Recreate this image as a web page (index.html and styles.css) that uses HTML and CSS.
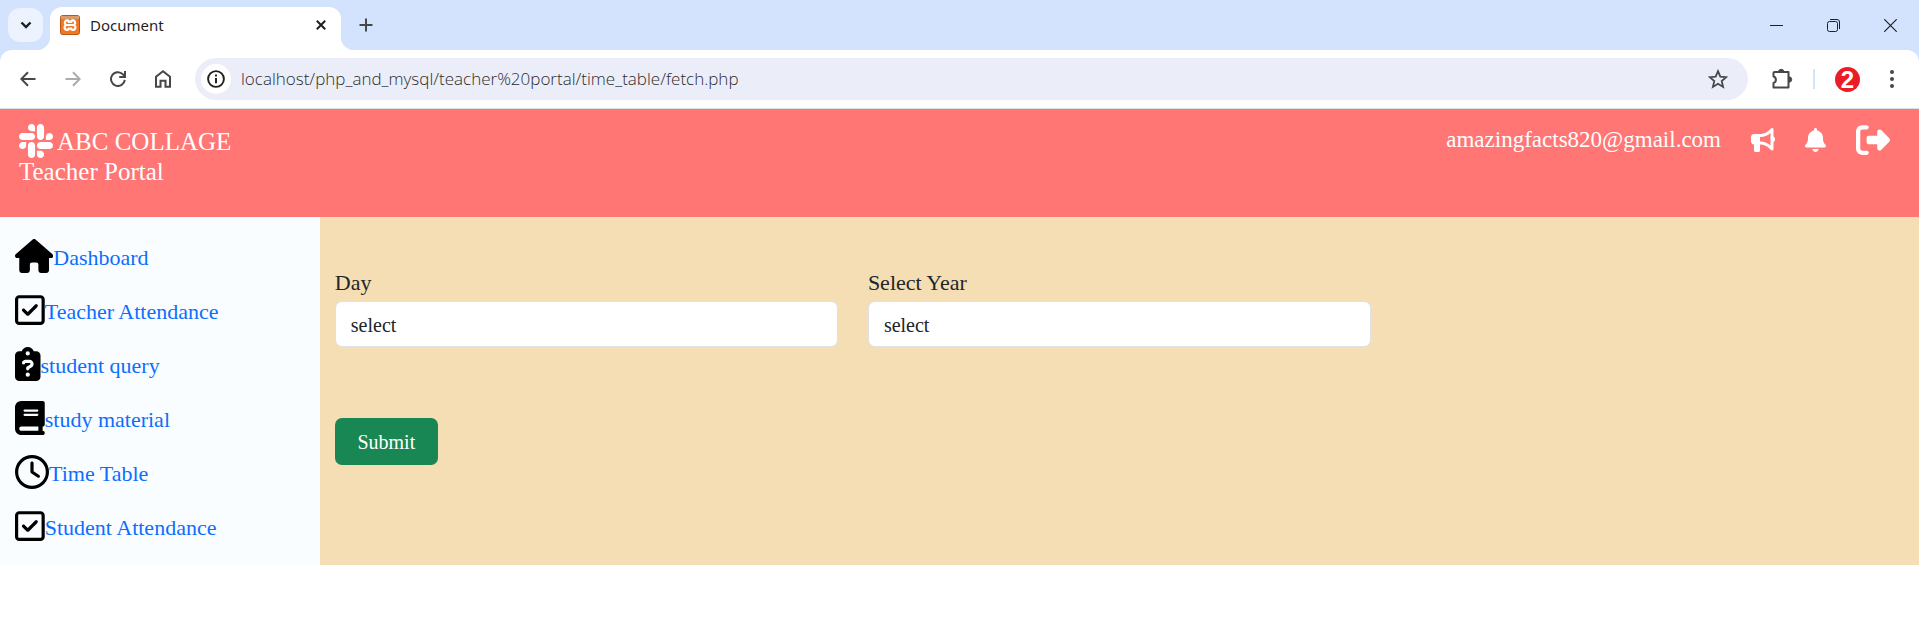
FILE: index.html
```html
<!DOCTYPE html>
<html lang="en">
<head>
<meta charset="utf-8">
<meta name="viewport" content="width=device-width, initial-scale=1">
<title>Document</title>
<link rel="stylesheet" href="styles.css">
</head>
<body>
<div class="browser">
  <div class="tab-strip">
    <button class="tab-search" aria-label="Search tabs"><svg width="12" height="8" viewBox="0 0 12 8" class="line"><path d="M1.500 1.500 6 6l4.500-4.500" stroke-width="2.400"/></svg></button>
    <div class="tab">
      <svg class="favicon" width="20" height="20" viewBox="0 0 20 20"><rect x=".5" y=".5" width="19" height="19" rx="2" fill="#f37623" stroke="#b5581a"/><path d="M1 1h18v3H1z" fill="#d99a6c"/><path d="M7.200 10H12.800M7.200 10a2.300 2.300 0 1 1 1.600-3.900L8.800 8 M7.200 10a2.500 2.500 0 1 0 1.600 4.300V12.500M12.800 10a2.300 2.300 0 1 0-1.600-3.900V8M12.800 10a2.500 2.500 0 1 1-1.600 4.300V12.500" fill="none" stroke="#fff" stroke-width="2.200" stroke-linejoin="round"/></svg>
      <span class="tab-title">Document</span>
      <button class="icon-button" aria-label="Close tab"><svg width="10" height="10" viewBox="0 0 10 10" class="line"><path d="m.8.800 8.400 8.400M9.200.800.800 9.200" stroke-width="2"/></svg></button>
    </div>
    <button class="icon-button new-tab" aria-label="New tab"><svg width="14" height="14" viewBox="0 0 14 14" class="line soft"><path d="M7 .5v13M.5 7h13" stroke-width="2"/></svg></button>
    <div class="window-controls">
      <button class="icon-button" aria-label="Minimize"><svg width="13" height="13" viewBox="0 0 13 13" class="line"><path d="M0 6.500h13"/></svg></button>
      <button class="icon-button" aria-label="Restore"><svg width="13" height="13" viewBox="0 0 13 13" class="line"><rect x=".5" y="2.500" width="10" height="10" rx="2"/><path d="M3 .5h7a2.500 2.500 0 0 1 2.500 2.500v7"/></svg></button>
      <button class="icon-button" aria-label="Close window"><svg width="13" height="13" viewBox="0 0 13 13" class="line"><path d="m.3.300 12.400 12.400M12.700.300.300 12.700" stroke-width="1.200"/></svg></button>
    </div>
  </div>
  <div class="toolbar">
    <div class="toolbar-buttons">
      <button class="icon-button" aria-label="Back"><svg width="16" height="16" viewBox="0 0 16 16" class="line soft"><path d="M15.500 8H1.800M8 1.200 1.300 8 8 14.800" stroke-width="2"/></svg></button>
      <button class="icon-button" aria-label="Forward"><svg width="16" height="16" viewBox="0 0 16 16" class="line faded"><path d="M.5 8h13.700M8 1.200 14.700 8 8 14.800" stroke-width="2"/></svg></button>
      <button class="icon-button" aria-label="Reload"><svg width="16" height="16" viewBox="0 0 16 16" class="line soft"><path d="M14.800 8.800A6.900 6.900 0 1 1 13 3.400L14.800 5.500M15 0v6H9.200" stroke-width="2"/></svg></button>
      <button class="icon-button" aria-label="Home"><svg width="16" height="18" viewBox="0 0 16 18" class="line soft"><path d="M1 16.800V6.800L8 1.300l7 5.500v10h-4.500v-6h-5v6z" stroke-width="2"/></svg></button>
    </div>
    <div class="address">
      <button class="site-info" aria-label="View site information"><svg width="18" height="18" viewBox="0 0 18 18" class="line"><circle cx="9" cy="9" r="7.900" stroke-width="1.900"/><path d="M9 8v5.200M9 4.600v2" stroke-width="2"/></svg></button>
      <input class="url" type="text" aria-label="Address" value="localhost/php_and_mysql/teacher%20portal/time_table/fetch.php">
      <button class="icon-button" aria-label="Bookmark this page"><svg width="20" height="20" viewBox="0 0 20 20" class="line soft"><path d="m10 2.200 2.300 5.500 5.900.500-4.500 3.900 1.400 5.800L10 14.800l-5.100 3.100 1.400-5.800-4.500-3.900 5.900-.500z" stroke-width="1.800"/></svg></button>
    </div>
    <div class="toolbar-end">
      <button class="icon-button" aria-label="Extensions"><svg width="22" height="22" viewBox="0 0 22 22" class="line soft"><path d="M3.500 4h14v15.500H2.500v-4.500a3.400 3.400 0 0 0 0-6.500V5a1 1 0 0 1 1-1z" stroke-width="2" stroke-linejoin="round"/><path d="M7.500 4a2.700 2.700 0 0 1 5.400 0M18 8.800a2.700 2.700 0 0 1 0 5.400" fill="#474747"/></svg></button>
      <span class="divider"></span>
      <button class="profile" aria-label="Profile">2</button>
      <button class="icon-button" aria-label="Menu"><svg width="4" height="18" viewBox="0 0 4 18" fill="#474747"><circle cx="2" cy="2" r="2"/><circle cx="2" cy="9" r="2"/><circle cx="2" cy="16" r="2"/></svg></button>
    </div>
  </div>
</div>
<header class="header">
  <div class="brand">
    <div class="brand-name"><svg class="slack" viewBox="0 32 448 448"><path d="M94.120 315.100c0 25.900-21.160 47.060-47.060 47.060S0 341 0 315.100c0-25.900 21.160-47.060 47.060-47.060h47.060v47.060zm23.720 0c0-25.900 21.160-47.060 47.060-47.060s47.060 21.160 47.060 47.060v117.840c0 25.900-21.160 47.060-47.060 47.060s-47.060-21.160-47.060-47.060V315.100zm47.060-188.980c-25.900 0-47.060-21.160-47.060-47.060S139 32 164.900 32s47.060 21.160 47.060 47.060v47.060H164.900zm0 23.720c25.900 0 47.060 21.160 47.060 47.060s-21.160 47.060-47.060 47.060H47.060C21.160 243.960 0 222.800 0 196.900s21.160-47.060 47.060-47.060H164.900zm188.980 47.060c0-25.900 21.160-47.060 47.060-47.060 25.900 0 47.060 21.160 47.060 47.060s-21.160 47.060-47.060 47.060h-47.060V196.900zm-23.720 0c0 25.900-21.160 47.060-47.060 47.060-25.900 0-47.060-21.160-47.060-47.060V79.060c0-25.900 21.160-47.060 47.060-47.060 25.900 0 47.060 21.160 47.060 47.060V196.900zM283.100 385.880c25.900 0 47.060 21.160 47.060 47.060 0 25.900-21.160 47.060-47.060 47.060-25.900 0-47.060-21.160-47.060-47.060v-47.060h47.060zm0-23.720c-25.900 0-47.060-21.160-47.060-47.060 0-25.900 21.160-47.060 47.060-47.060h117.840c25.900 0 47.060 21.160 47.060 47.060 0 25.900-21.160 47.060-47.060 47.060H283.100z"/></svg><span>ABC COLLAGE</span></div>
    <div class="brand-sub">Teacher Portal</div>
  </div>
  <div class="account">
    <span class="email">amazingfacts820@gmail.com</span>
    <a href="#" aria-label="Announcements"><svg class="small" viewBox="0 0 512 512"><path d="M480 32c0-12.900-7.800-24.600-19.800-29.600s-25.700-2.200-34.900 6.900L381.700 53c-48 48-113.100 75-181 75H192 160 64c-35.300 0-64 28.700-64 64v96c0 35.300 28.700 64 64 64l0 128c0 17.700 14.300 32 32 32h64c17.700 0 32-14.300 32-32V352l8.700 0c67.900 0 133 27 181 75l43.600 43.600c9.200 9.200 22.900 11.900 34.900 6.900s19.800-16.600 19.800-29.600V300.400c18.600-8.800 32-32.500 32-60.400s-13.400-51.600-32-60.400V32zm-64 76.700V240 371.300C357.200 317.800 280.500 288 200.700 288H192V192h8.700c79.800 0 156.500-29.800 215.300-83.300z"/></svg></a>
    <a href="#" aria-label="Notifications"><svg class="small" viewBox="0 0 448 512"><path d="M224 0c-17.700 0-32 14.300-32 32V51.200C119 66 64 130.600 64 208v18.800c0 47-17.300 92.400-48.500 127.600l-7.400 8.300c-8.400 9.400-10.400 22.900-5.300 34.400S19.400 416 32 416H416c12.600 0 24-7.400 29.200-18.900s3.100-25-5.300-34.400l-7.400-8.300C401.300 319.200 384 273.900 384 226.800V208c0-77.400-55-142-128-156.800V32c0-17.700-14.300-32-32-32zm45.300 493.300c12-12 18.700-28.300 18.700-45.300H224 160c0 17 6.700 33.300 18.700 45.300s28.300 18.700 45.300 18.700s33.300-6.700 45.300-18.700z"/></svg></a>
    <a href="#" aria-label="Log out"><svg class="large" viewBox="0 0 512 512"><path d="M377.900 105.900L500.700 228.700c7.200 7.200 11.300 17.100 11.300 27.300s-4.100 20.100-11.300 27.300L377.900 406.100c-6.400 6.400-15 9.900-24 9.900c-18.700 0-33.900-15.200-33.900-33.900l0-62.100-128 0c-17.700 0-32-14.300-32-32l0-64c0-17.700 14.300-32 32-32l128 0 0-62.100c0-18.700 15.200-33.900 33.900-33.900c9 0 17.600 3.600 24 9.900zM160 96L96 96c-17.700 0-32 14.300-32 32l0 256c0 17.700 14.300 32 32 32l64 0c17.700 0 32 14.300 32 32s-14.300 32-32 32l-64 0c-53 0-96-43-96-96L0 128C0 75 43 32 96 32l64 0c17.700 0 32 14.300 32 32s-14.300 32-32 32z"/></svg></a>
  </div>
</header>
<div class="page">
  <nav class="sidebar">
    <a href="#"><svg class="large" viewBox="0 0 576 512"><path d="M575.800 255.500c0 18-15 32.100-32 32.100h-32l.7 160.200c0 2.700-.2 5.400-.5 8.100V472c0 22.100-17.900 40-40 40H456c-1.100 0-2.200 0-3.300-.1c-1.400 .1-2.800 .1-4.200 .1H416 392c-22.100 0-40-17.900-40-40V448 384c0-17.700-14.300-32-32-32H256c-17.700 0-32 14.300-32 32v64 24c0 22.100-17.900 40-40 40H160 128.100c-1.500 0-3-.1-4.500-.2c-1.200 .1-2.400 .2-3.600 .2H104c-22.100 0-40-17.900-40-40V360c0-.9 0-1.900 .1-2.800V287.600H32c-18 0-32-14-32-32.100c0-9 3-17 10-24L266.400 8c7-7 15-8 22-8s15 2 21 7L564.800 231.500c8 7 12 15 11 24z"/></svg><span>Dashboard</span></a>
    <a href="#"><svg class="large" viewBox="0 0 448 512"><path d="M64 80c-8.800 0-16 7.200-16 16V416c0 8.800 7.200 16 16 16H384c8.800 0 16-7.200 16-16V96c0-8.800-7.200-16-16-16H64zM0 96C0 60.700 28.700 32 64 32H384c35.300 0 64 28.700 64 64V416c0 35.300-28.700 64-64 64H64c-35.300 0-64-28.700-64-64V96zM337 209L209 337c-9.400 9.400-24.600 9.400-33.900 0l-64-64c-9.400-9.400-9.400-24.600 0-33.900s24.600-9.400 33.900 0l47 47L303 175c9.400-9.400 24.600-9.400 33.900 0s9.400 24.600 0 33.900z"/></svg><span>Teacher Attendance</span></a>
    <a href="#"><svg class="large" viewBox="0 0 384 512"><path d="M192 0c-41.800 0-77.400 26.700-90.500 64H64C28.700 64 0 92.700 0 128V448c0 35.300 28.700 64 64 64H320c35.300 0 64-28.700 64-64V128c0-35.300-28.700-64-64-64H282.500C269.400 26.700 233.800 0 192 0zm0 64a32 32 0 1 1 0 64 32 32 0 1 1 0-64zM105.800 229.300c7.900-22.300 29.100-37.300 52.800-37.300h58.300c34.900 0 63.100 28.300 63.100 63.100c0 22.600-12.100 43.500-31.700 54.800L216 328.400c-.2 13-10.900 23.600-24 23.600c-13.300 0-24-10.700-24-24V314.500c0-8.600 4.600-16.500 12.100-20.800l44.300-25.400c4.700-2.700 7.600-7.700 7.600-13.100c0-8.400-6.800-15.100-15.100-15.100H158.600c-3.400 0-6.400 2.100-7.500 5.300l-.4 1.200c-4.400 12.500-18.200 19-30.600 14.600s-19-18.200-14.600-30.600l.4-1.200zM160 416a32 32 0 1 1 64 0 32 32 0 1 1 -64 0z"/></svg><span>student query</span></a>
    <a href="#"><svg class="large" viewBox="0 0 448 512"><path d="M96 0C43 0 0 43 0 96V416c0 53 43 96 96 96H384h32c17.700 0 32-14.300 32-32s-14.300-32-32-32V384c17.700 0 32-14.300 32-32V32c0-17.700-14.300-32-32-32H384 96zm0 384H352v64H96c-17.700 0-32-14.300-32-32s14.300-32 32-32zm32-240c0-8.800 7.200-16 16-16H336c8.800 0 16 7.200 16 16s-7.200 16-16 16H144c-8.800 0-16-7.200-16-16zm16 48H336c8.800 0 16 7.200 16 16s-7.200 16-16 16H144c-8.800 0-16-7.200-16-16s7.200-16 16-16z"/></svg><span>study material</span></a>
    <a href="#"><svg class="large" viewBox="0 0 512 512"><path d="M464 256A208 208 0 1 1 48 256a208 208 0 1 1 416 0zM0 256a256 256 0 1 0 512 0A256 256 0 1 0 0 256zM232 120V256c0 8 4 15.500 10.700 20l96 64c11 7.400 25.900 4.400 33.300-6.700s4.400-25.900-6.700-33.300L280 243.200V120c0-13.300-10.700-24-24-24s-24 10.700-24 24z"/></svg><span>Time Table</span></a>
    <a href="#"><svg class="large" viewBox="0 0 448 512"><path d="M64 80c-8.800 0-16 7.200-16 16V416c0 8.800 7.200 16 16 16H384c8.800 0 16-7.200 16-16V96c0-8.800-7.200-16-16-16H64zM0 96C0 60.700 28.700 32 64 32H384c35.300 0 64 28.700 64 64V416c0 35.300-28.700 64-64 64H64c-35.300 0-64-28.700-64-64V96zM337 209L209 337c-9.400 9.400-24.600 9.400-33.900 0l-64-64c-9.400-9.400-9.400-24.600 0-33.900s24.600-9.400 33.900 0l47 47L303 175c9.400-9.400 24.600-9.400 33.900 0s9.400 24.600 0 33.900z"/></svg><span>Student Attendance</span></a>
  </nav>
  <main class="content">
    <form>
      <div class="fields">
        <div class="field">
          <label for="day">Day</label>
          <select id="day"><option>select</option></select>
        </div>
        <div class="field">
          <label for="year">Select Year</label>
          <select id="year"><option>select</option></select>
        </div>
      </div>
      <button class="submit" type="submit">Submit</button>
    </form>
  </main>
</div>
</body>
</html>
```

FILE: styles.css
```css
* {
  box-sizing: border-box;
}

body {
  margin: 0;
  background: #fff;
  color: #212529;
  font-family: "Liberation Serif", "Times New Roman", serif;
  font-size: 22px;
  line-height: 32px;
}

a {
  color: inherit;
  text-decoration: none;
}

button,
input,
select {
  font: inherit;
  color: inherit;
}

button {
  padding: 0;
  border: 0;
  background: none;
}

svg {
  display: block;
  flex: none;
}

.line {
  fill: none;
  stroke: #1f1f1f;
}

.line.soft {
  stroke: #474747;
}

.line.faded {
  stroke: #ababab;
}

.small {
  height: 24px;
}

.large {
  height: 34px;
}

/* Browser frame */
.browser {
  background: #d3e3fd;
  border-bottom: 1px solid #dcdfe3;
  font-family: "Open Sans", "Noto Sans", sans-serif;
}

.tab-strip {
  display: flex;
  align-items: center;
  height: 50px;
  padding: 0 22px 0 8px;
}

.tab-search {
  display: grid;
  place-items: center;
  width: 35px;
  height: 34px;
  border-radius: 12px;
  background: #ecf2fe;
}

.icon-button {
  display: grid;
  place-items: center;
}

.tab {
  position: relative;
  display: flex;
  align-items: center;
  gap: 10px;
  width: 291px;
  height: 43px;
  margin: 7px 0 0 7px;
  padding: 0 15px 7px 10px;
  border-radius: 12px 12px 0 0;
  background: #fff;
}

.tab::before,
.tab::after {
  content: "";
  position: absolute;
  bottom: 0;
  width: 14px;
  height: 14px;
}

.tab::before {
  right: 100%;
  background: radial-gradient(circle at 0 0, transparent 14px, #fff 15px);
}

.tab::after {
  left: 100%;
  background: radial-gradient(circle at 100% 0, transparent 14px, #fff 15px);
}

.tab-title {
  flex: 1;
  color: #1f1f1f;
  font-family: "Noto Sans", sans-serif;
  font-size: 15px;
}

.new-tab {
  margin-left: 18px;
}

.window-controls {
  display: flex;
  gap: 44px;
  margin-left: auto;
}

.toolbar {
  display: flex;
  align-items: center;
  height: 58px;
  padding: 0 25px 0 20px;
  border-radius: 12px 12px 0 0;
  background: #fff;
}

.toolbar-buttons {
  display: flex;
  gap: 29px;
}

.address {
  display: flex;
  flex: 1;
  align-items: center;
  height: 42px;
  margin-left: 24px;
  padding: 0 20px 0 6px;
  border-radius: 21px;
  background: #ebeef8;
}

.site-info {
  display: grid;
  place-items: center;
  width: 30px;
  height: 30px;
  border-radius: 50%;
  background: #fff;
}

.url {
  flex: 1;
  min-width: 0;
  padding: 0 10px;
  border: 0;
  background: none;
  color: #2c2c2c;
  font-size: 17px;
  font-weight: 300;
}

.toolbar-end {
  display: flex;
  align-items: center;
  margin-left: 23px;
  gap: 20px;
}

.divider {
  width: 2px;
  height: 20px;
  background: #d3e3fd;
}

.profile {
  width: 25px;
  height: 25px;
  border-radius: 50%;
  background: #ed1c24;
  color: #fff;
  font: bold 24px/25px "Liberation Sans", sans-serif;
}

.toolbar-end .icon-button:last-child {
  margin-left: 10px;
}

/* Portal header */
.header {
  display: flex;
  justify-content: space-between;
  align-items: flex-start;
  min-height: 108px;
  padding: 15px 29px 14px 19px;
  background: #ff7674;
  color: #fff;
  font-size: 25px;
}

.header svg {
  fill: #fff;
}

.brand-name {
  display: flex;
  align-items: center;
  gap: 4px;
}

.brand-name span {
  padding-top: 2px;
}

.slack {
  width: 34px;
}

.brand-sub {
  line-height: 28px;
}

.account {
  display: flex;
  align-items: center;
  gap: 30px;
  margin-top: -1px;
}

.email {
  font-size: 23px;
}

/* Page body */
.page {
  display: grid;
  grid-template-columns: 1fr 5fr;
}

.sidebar {
  padding: 12px 15px;
  background: #fafdff;
  color: #0d6efd;
}

.sidebar svg {
  fill: #000;
}

.sidebar a {
  display: flex;
  align-items: center;
  height: 54px;
}

.sidebar span {
  padding-top: 3px;
}

.content {
  padding-top: 50px;
  background: #f5deb3;
}

.fields {
  display: grid;
  grid-template-columns: repeat(3, 1fr);
}

.field {
  display: flex;
  flex-direction: column;
  gap: 2px;
  padding: 0 15px;
}

.field select {
  appearance: none;
  width: 100%;
  height: 46px;
  padding: 2px 15px 0;
  border: 1px solid #dee2e6;
  border-radius: 7px;
  background: #fff;
  font-size: 20px;
}

.submit {
  width: 103px;
  height: 47px;
  margin: 71px 15px 0;
  border-radius: 7px;
  background: #198754;
  color: #fff;
  font-size: 20px;
}
```
